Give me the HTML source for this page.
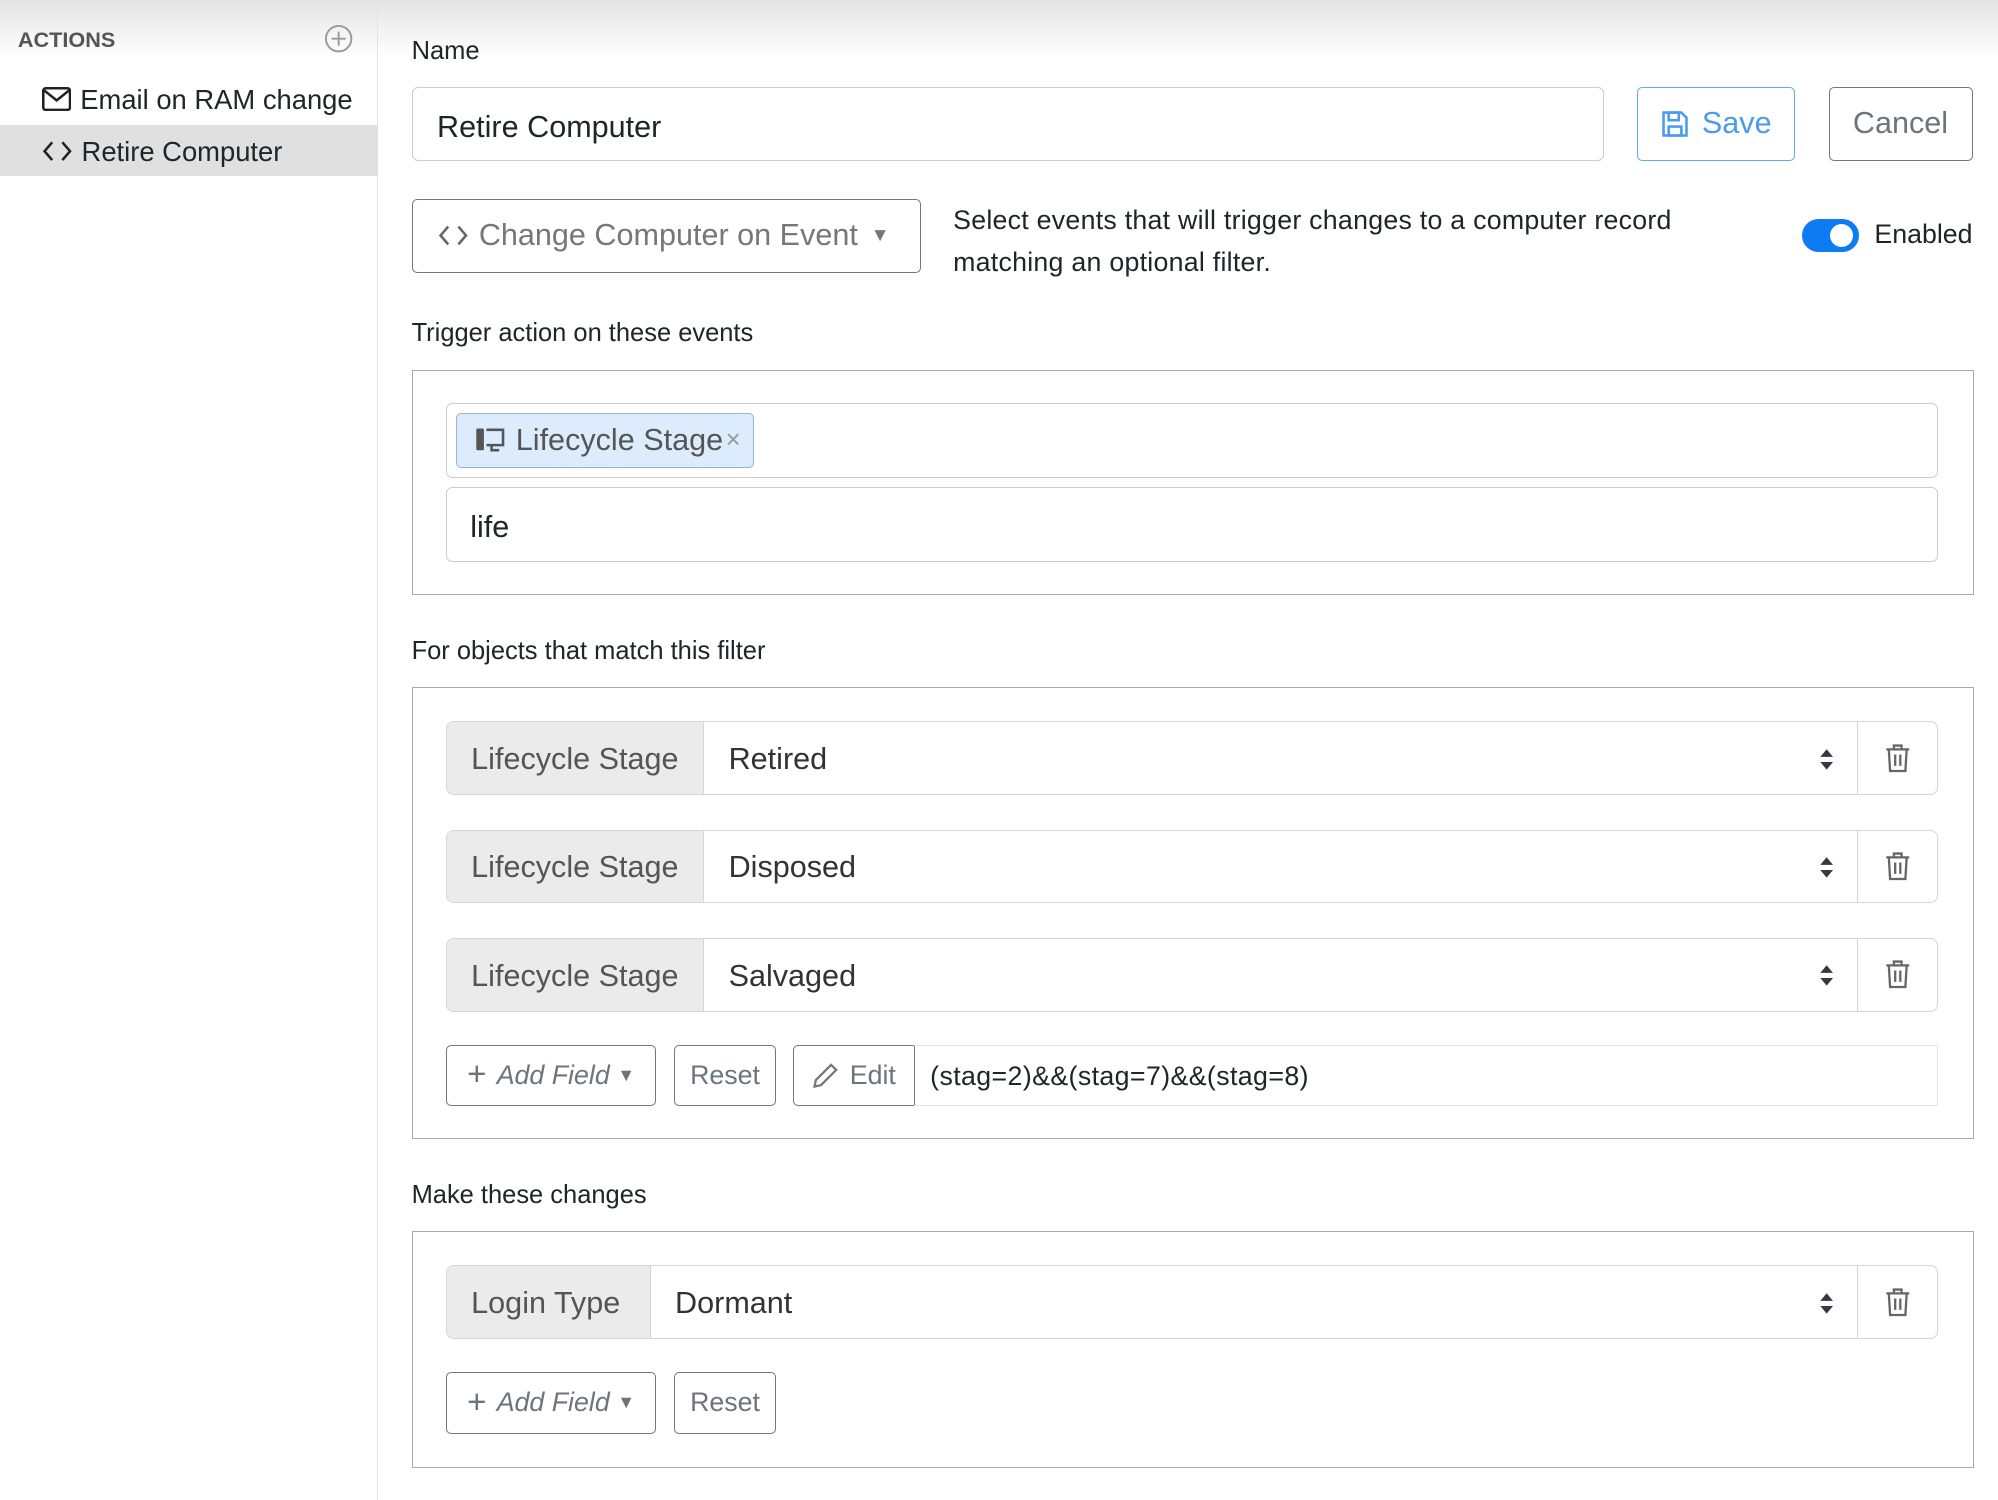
<!DOCTYPE html>
<html><head><meta charset="utf-8"><style>
*{box-sizing:border-box;margin:0;padding:0}
html,body{width:1998px;height:1500px;overflow:hidden;background:#fff}
#w{zoom:1.27423;width:1568px;height:1177px;position:relative;font-family:"Liberation Sans",sans-serif;color:#212529}
.a{position:absolute}
.top{left:0;top:0;width:1568px;height:45px;background:linear-gradient(#e4e4e4,#fff)}
.side{left:0;top:0;width:297px;height:1177px;border-right:1px solid #e2e2e2}
.lbl{font-size:20px;color:#212529}
.inp{border:1px solid #ccc;border-radius:5px;background:#fff}
.box{border:1.5px solid #aaa}
.btn{border:1.5px solid #777;border-radius:4px;color:#6c757d;font-size:21px;display:flex;align-items:center;justify-content:center;background:#fff}
.row{position:absolute;left:350px;width:1171px;height:58px;border:1.5px solid #d2d6da;border-radius:6px;display:flex;font-size:24px;overflow:hidden}
.row .l{background:#ebebeb;color:#555;display:flex;align-items:center;padding-left:19px;border-right:1.5px solid #d2d6da;padding-top:2px}
.row .s{flex:1;display:flex;align-items:center;padding-left:19px;position:relative;color:#333;padding-top:2px}
.row .t{width:63px;border-left:1.5px solid #d2d6da;display:flex;align-items:center;justify-content:center}
.arr{position:absolute;right:18px;top:20px}
</style></head><body><div id="w">
<div class="a top"></div>
<div class="a side">
 <div class="a" style="left:14px;top:21px;font-size:17px;font-weight:bold;color:#555">ACTIONS</div>
 <svg class="a" style="left:254px;top:19px" width="23" height="23" viewBox="0 0 23 23"><circle cx="11.5" cy="11.5" r="10" fill="none" stroke="#999" stroke-width="1.5"/><path d="M11.5 6v11M6 11.5h11" stroke="#999" stroke-width="1.5"/></svg>
 <svg class="a" style="left:33px;top:68px" width="23" height="19" viewBox="0 0 23 19"><rect x="1" y="1" width="21" height="17" rx="2" fill="none" stroke="#222" stroke-width="2"/><path d="M1.5 2.5l10 8 10-8" fill="none" stroke="#222" stroke-width="2"/></svg>
 <div class="a" style="left:63px;top:66px;font-size:21.5px">Email on RAM change</div>
 <div class="a" style="left:0;top:98px;width:297px;height:40px;background:#e0e0e0"></div>
 <svg class="a" style="left:33px;top:111px" width="24" height="16" viewBox="0 0 24 16"><path d="M8 1L2 8l6 7M16 1l6 7-6 7" fill="none" stroke="#222" stroke-width="2"/></svg>
 <div class="a" style="left:64px;top:107px;font-size:21.5px">Retire Computer</div>
</div>
<div class="a lbl" style="left:323px;top:29px">Name</div>
<div class="a inp" style="left:323px;top:68px;width:936px;height:58px;border-width:1.5px"></div>
<div class="a" style="left:343px;top:86px;font-size:24px">Retire Computer</div>
<div class="a btn" style="left:1285px;top:68px;width:124px;height:58px;border-color:#64a8f0;color:#4a9af0;font-size:24px">
 <svg width="22" height="22" viewBox="0 0 22 22" style="margin-right:10px"><path d="M2 2h14l4 4v14H2z" fill="none" stroke="#4a9af0" stroke-width="2"/><rect x="6" y="2" width="8" height="6" fill="none" stroke="#4a9af0" stroke-width="2"/><rect x="6" y="13" width="10" height="7" fill="none" stroke="#4a9af0" stroke-width="2"/></svg>Save</div>
<div class="a btn" style="left:1435px;top:68px;width:113px;height:58px;font-size:24px">Cancel</div>
<div class="a btn" style="left:323px;top:156px;width:400px;height:58px;font-size:24px;justify-content:flex-start;padding-left:20px;color:#777">
 <svg width="24" height="18" viewBox="0 0 24 18" style="margin-right:8px"><path d="M8 2L2 9l6 7M16 2l6 7-6 7" fill="none" stroke="#666" stroke-width="2"/></svg>Change Computer on Event<span style="margin-left:10px;font-size:15px">&#9660;</span></div>
<div class="a" style="left:748px;top:156px;font-size:21px;line-height:33px;letter-spacing:0.2px">Select events that will trigger changes to a computer record<br>matching an optional filter.</div>
<div class="a" style="left:1414px;top:172px;width:45px;height:26px;border-radius:13px;background:#0d7cf2"><div class="a" style="left:22px;top:4px;width:18px;height:18px;border-radius:9px;background:#fff"></div></div>
<div class="a" style="left:1471px;top:172px;font-size:21px">Enabled</div>
<div class="a lbl" style="left:323px;top:250px">Trigger action on these events</div>
<div class="a box" style="left:323px;top:290px;width:1226px;height:177px"></div>
<div class="a inp" style="left:350px;top:316px;width:1171px;height:59px"></div>
<div class="a" style="left:358px;top:324px;width:234px;height:43px;background:#dcecfd;border:1px solid #9cb5cf;border-radius:4px;display:flex;align-items:center;padding-left:14px;font-size:24px;color:#555">
 <svg width="24" height="22" viewBox="0 0 24 22" style="margin-right:8px"><rect x="1" y="2" width="6" height="17" rx="1" fill="#555"/><path d="M9 3h13v12H9" fill="none" stroke="#555" stroke-width="2"/><path d="M13 15v4h6" fill="none" stroke="#555" stroke-width="2"/></svg>Lifecycle Stage<span style="color:#999;font-size:20px;margin-left:2px">&times;</span></div>
<div class="a inp" style="left:350px;top:382px;width:1171px;height:59px"></div>
<div class="a" style="left:369px;top:400px;font-size:24px">life</div>
<div class="a lbl" style="left:323px;top:500px">For objects that match this filter</div>
<div class="a box" style="left:323px;top:539px;width:1226px;height:355px"></div>
<div class="row" style="top:566px"><div class="l" style="width:202px">Lifecycle Stage</div><div class="s">Retired<svg class="arr" width="12" height="18" viewBox="0 0 12 18"><path d="M6 1l5 6H1zM6 17l5-6H1z" fill="#343a40"/></svg></div><div class="t"><svg width="20" height="24" viewBox="0 0 20 24"><path d="M1 5h18M7 5V2h6v3M3 5l1 17h12l1-17M8 9v9M12 9v9" fill="none" stroke="#666" stroke-width="1.8"/></svg></div></div>
<div class="row" style="top:651px"><div class="l" style="width:202px">Lifecycle Stage</div><div class="s">Disposed<svg class="arr" width="12" height="18" viewBox="0 0 12 18"><path d="M6 1l5 6H1zM6 17l5-6H1z" fill="#343a40"/></svg></div><div class="t"><svg width="20" height="24" viewBox="0 0 20 24"><path d="M1 5h18M7 5V2h6v3M3 5l1 17h12l1-17M8 9v9M12 9v9" fill="none" stroke="#666" stroke-width="1.8"/></svg></div></div>
<div class="row" style="top:736px"><div class="l" style="width:202px">Lifecycle Stage</div><div class="s">Salvaged<svg class="arr" width="12" height="18" viewBox="0 0 12 18"><path d="M6 1l5 6H1zM6 17l5-6H1z" fill="#343a40"/></svg></div><div class="t"><svg width="20" height="24" viewBox="0 0 20 24"><path d="M1 5h18M7 5V2h6v3M3 5l1 17h12l1-17M8 9v9M12 9v9" fill="none" stroke="#666" stroke-width="1.8"/></svg></div></div>
<div class="a btn" style="left:350px;top:820px;width:165px;height:48px;font-style:italic"><span style="font-style:normal;font-size:26px;margin-right:8px">+</span>Add Field<span style="font-style:normal;font-size:14px;margin-left:6px">&#9660;</span></div>
<div class="a btn" style="left:529px;top:820px;width:80px;height:48px">Reset</div>
<div class="a btn" style="left:622px;top:820px;width:96px;height:48px;border-radius:4px 0 0 4px"><svg width="22" height="22" viewBox="0 0 22 22" style="margin-right:8px"><path d="M2 20l1-5L15 3l4 4L7 19z" fill="none" stroke="#777" stroke-width="1.8"/></svg>Edit</div>
<div class="a" style="left:717px;top:820px;width:804px;height:48px;border:1px solid #e4e4e4;border-left:none;font-size:21px;padding:12px 0 0 13px;letter-spacing:0.3px">(stag=2)&amp;&amp;(stag=7)&amp;&amp;(stag=8)</div>
<div class="a lbl" style="left:323px;top:927px">Make these changes</div>
<div class="a box" style="left:323px;top:966px;width:1226px;height:186px"></div>
<div class="row" style="top:993px"><div class="l" style="width:160px">Login Type</div><div class="s">Dormant<svg class="arr" width="12" height="18" viewBox="0 0 12 18"><path d="M6 1l5 6H1zM6 17l5-6H1z" fill="#343a40"/></svg></div><div class="t"><svg width="20" height="24" viewBox="0 0 20 24"><path d="M1 5h18M7 5V2h6v3M3 5l1 17h12l1-17M8 9v9M12 9v9" fill="none" stroke="#666" stroke-width="1.8"/></svg></div></div>
<div class="a btn" style="left:350px;top:1077px;width:165px;height:48px;font-style:italic"><span style="font-style:normal;font-size:26px;margin-right:8px">+</span>Add Field<span style="font-style:normal;font-size:14px;margin-left:6px">&#9660;</span></div>
<div class="a btn" style="left:529px;top:1077px;width:80px;height:48px">Reset</div>
</div></body></html>
